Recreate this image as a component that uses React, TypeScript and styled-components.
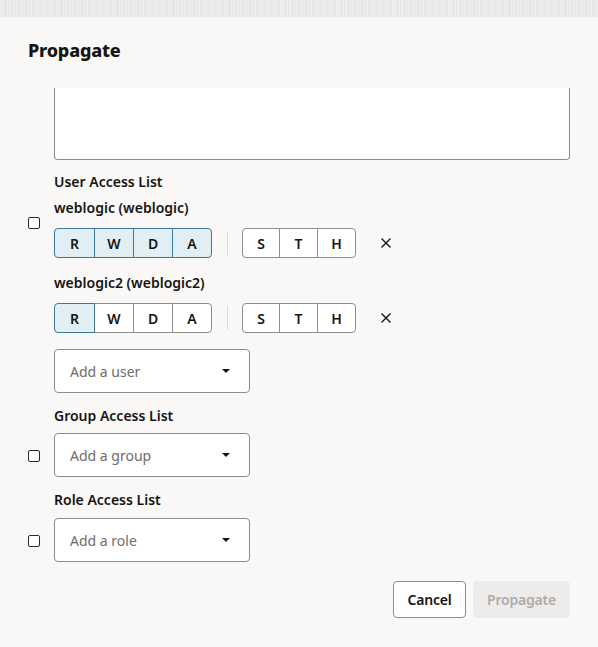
import styled, { createGlobalStyle } from "styled-components";

const GlobalStyle = createGlobalStyle`
  html, body {
    margin: 0;
    padding: 0;
    background: #f9f8f6;
    font-family: "Noto Sans", "Liberation Sans", sans-serif;
    color: #161513;
  }
`;

const Backdrop = styled.div`
  height: 17px;
  background-color: #ecebe9;
  background-image:
    repeating-linear-gradient(90deg, rgba(255, 255, 255, 0.35) 0 1px, transparent 1px 2px, rgba(255, 255, 255, 0.25) 2px 4px, transparent 4px 7px),
    repeating-linear-gradient(0deg, rgba(0, 0, 0, 0.02) 0 3px, transparent 3px 4px);
`;

const Dialog = styled.div`
  display: flex;
  flex-direction: column;
  background: #f9f8f6;
  height: 630px;
`;

const Header = styled.div`
  height: 71px;
  display: flex;
  align-items: center;
  padding: 0 28px;
  box-sizing: border-box;
`;

const Title = styled.h1`
  margin: 0 0 6px;
  font-size: 18px;
  font-weight: 800;
  letter-spacing: -0.2px;
`;

const Body = styled.div`
  display: grid;
  grid-template-columns: 26px 1fr;
  padding: 0 28px;
  align-items: start;
`;

const Full = styled.div`
  grid-column: 2;
`;

const Textarea = styled.div`
  height: 71px;
  background: #fff;
  border: 1px solid #8f8d8a;
  border-top: none;
  border-radius: 0 0 4px 4px;
`;

const Label = styled.div<{ $top: number }>`
  grid-column: 2;
  margin-top: ${(p) => p.$top}px;
  font-size: 14px;
  font-weight: 600;
  line-height: 20px;
`;

const Check = styled.span<{ $top: number }>`
  grid-column: 1;
  display: block;
  width: 10px;
  height: 10px;
  margin-top: ${(p) => p.$top}px;
  border: 1.5px solid #2b2a28;
  border-radius: 2px;
  background: #fff;
`;

const UserList = styled.div`
  grid-column: 2;
  display: flex;
  flex-direction: column;
  margin-top: 6px;
`;

const UserName = styled.div<{ $top: number }>`
  margin-top: ${(p) => p.$top}px;
  font-size: 14px;
  font-weight: 600;
  line-height: 20px;
`;

const Row = styled.div`
  display: flex;
  align-items: center;
  margin-top: 10px;
`;

const Segments = styled.div`
  display: flex;
`;

const Seg = styled.button<{ $on: boolean; $w: number }>`
  width: ${(p) => p.$w}px;
  height: 30px;
  box-sizing: border-box;
  margin-left: -1px;
  position: relative;
  z-index: ${(p) => (p.$on ? 1 : 0)};
  border: 1px solid ${(p) => (p.$on ? "#3a7899" : "#8f8d8a")};
  background: ${(p) => (p.$on ? "#e1eef4" : "#fff")};
  font-family: inherit;
  font-size: 14px;
  font-weight: 600;
  color: #161513;
  padding: 0;
  &:first-child {
    margin-left: 0;
    border-radius: 4px 0 0 4px;
  }
  &:last-child {
    border-radius: 0 4px 4px 0;
  }
`;

const Divider = styled.span`
  width: 1px;
  height: 24px;
  background: #dcdad7;
  margin: 0 14px 0 15px;
`;

const Remove = styled.span`
  display: flex;
  margin-left: 24px;
  color: #161513;
`;

const Select = styled.div<{ $top: number }>`
  grid-column: 2;
  width: 196px;
  height: 44px;
  margin-top: ${(p) => p.$top}px;
  box-sizing: border-box;
  border: 1px solid #8f8d8a;
  border-radius: 4px;
  background: #fff;
  display: flex;
  align-items: center;
  justify-content: space-between;
  padding: 0 19px 0 15px;
  font-size: 14px;
  color: #6f6c69;
`;

const Caret = styled.span`
  width: 0;
  height: 0;
  border-left: 4px solid transparent;
  border-right: 4px solid transparent;
  border-top: 4px solid #161513;
`;

const Footer = styled.div`
  display: flex;
  justify-content: flex-end;
  gap: 7px;
  padding: 19px 28px 0;
`;

const Button = styled.button<{ $disabled?: boolean; $w: number }>`
  width: ${(p) => p.$w}px;
  height: 37px;
  box-sizing: border-box;
  padding: 0;
  border-radius: 4px;
  font-family: inherit;
  font-size: 14px;
  font-weight: 600;
  letter-spacing: -0.2px;
  border: 1px solid ${(p) => (p.$disabled ? "#edecea" : "#8f8d8a")};
  background: ${(p) => (p.$disabled ? "#edecea" : "#fff")};
  color: ${(p) => (p.$disabled ? "#aeaca9" : "#161513")};
`;

const CloseIcon = () => (
  <svg width="12" height="12" viewBox="0 0 12 12">
    <path d="M1.5 1.5 L10.5 10.5 M10.5 1.5 L1.5 10.5" stroke="#161513" strokeWidth="1.4" />
  </svg>
);

const rwda = [41, 40, 40, 40];
const sth = [38, 39, 39];

function AccessRow({ on }: { on: number }) {
  return (
    <Row>
      <Segments>
        {["R", "W", "D", "A"].map((l, i) => (
          <Seg key={l} $on={i < on} $w={rwda[i]}>
            {l}
          </Seg>
        ))}
      </Segments>
      <Divider />
      <Segments>
        {["S", "T", "H"].map((l, i) => (
          <Seg key={l} $on={false} $w={sth[i]}>
            {l}
          </Seg>
        ))}
      </Segments>
      <Remove>
        <CloseIcon />
      </Remove>
    </Row>
  );
}

export default function App() {
  return (
    <>
      <GlobalStyle />
      <Backdrop />
      <Dialog>
        <Header>
          <Title>Propagate</Title>
        </Header>
        <Body>
          <Full>
            <Textarea />
          </Full>
          <Label $top={12}>User Access List</Label>
          <Check $top={25} />
          <UserList>
            <UserName $top={0}>weblogic (weblogic)</UserName>
            <AccessRow on={4} />
            <UserName $top={15}>weblogic2 (weblogic2)</UserName>
            <AccessRow on={1} />
          </UserList>
          <Select $top={16}>
            Add a user <Caret />
          </Select>
          <Label $top={13}>Group Access List</Label>
          <Check $top={24} />
          <Select $top={7}>
            Add a group <Caret />
          </Select>
          <Label $top={13}>Role Access List</Label>
          <Check $top={25} />
          <Select $top={8}>
            Add a role <Caret />
          </Select>
        </Body>
        <Footer>
          <Button $w={73}>Cancel</Button>
          <Button $w={97} $disabled>
            Propagate
          </Button>
        </Footer>
      </Dialog>
    </>
  );
}
